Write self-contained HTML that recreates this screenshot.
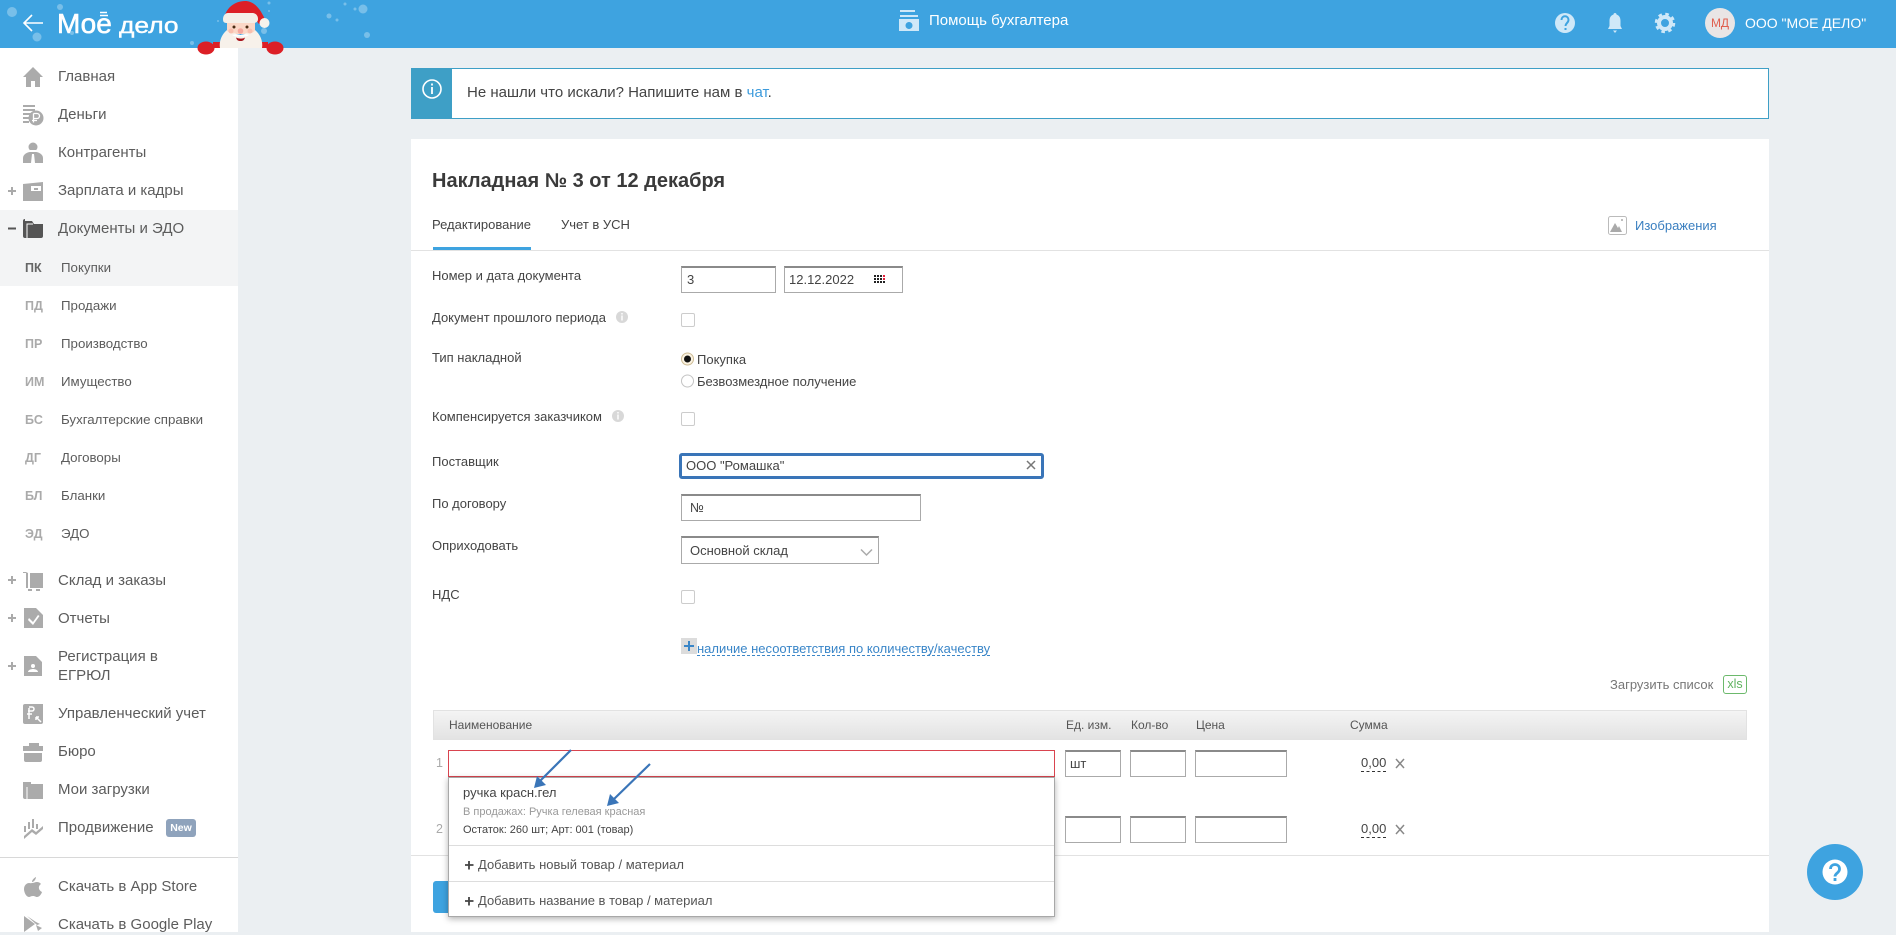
<!DOCTYPE html>
<html lang="ru"><head><meta charset="utf-8"><title>Накладная</title>
<style>
html,body{margin:0;padding:0;width:1896px;height:932px;overflow:hidden;background:#ebeff2;font-family:"Liberation Sans",Arial,sans-serif;color:#444}
.a{position:absolute}
.t{position:absolute;line-height:20px;white-space:nowrap}
.n{font-size:15px;color:#5c5c5c;left:58px;margin-top:1px}
.s{font-size:13.3px;color:#5c5c5c;left:61px}
.b{font-size:12.5px;font-weight:bold;color:#aaa;left:25px}
.l{font-size:13px;color:#444;left:432px}
.i{position:absolute;box-sizing:border-box;background:#fff;border:1px solid #aaa;border-top:2px solid #8a8a8a;font-size:13px;line-height:24px;color:#444;padding-left:5px}
.c{position:absolute;box-sizing:border-box;width:14px;height:14px;left:681px;border:1px solid #ccc;border-radius:2px;background:#fff}
.h{font-size:12px;color:#555;top:715px}
.hr{position:absolute;height:1px;background:#e2e2e2}
</style></head><body>

<div class="a" style="left:0;top:0;width:1896px;height:48px;background:#3ea3e0"></div>
<div class="a" style="left:0;top:48px;width:238px;height:884px;background:#fff"></div>
<div class="a" style="left:0;top:210px;width:238px;height:76px;background:#f3f4f5"></div>
<div class="hr" style="left:0;top:857px;width:238px;height:1px;background:#d8d8d8"></div>

<!-- logo text -->
<div class="t" style="left:57px;top:9px;font-size:28px;line-height:30px;color:#fff;-webkit-text-stroke:.6px #fff">Мое</div>
<div class="t" style="left:119px;top:11px;font-size:22px;line-height:30px;color:#fff;-webkit-text-stroke:.4px #fff;transform:scaleX(1.2);transform-origin:0 0">дело</div>

<div class="t" style="left:929px;top:11px;font-size:15px;color:#fff">Помощь бухгалтера</div>
<div class="t" style="left:1745px;top:13px;font-size:14px;color:#fff">ООО "МОЕ ДЕЛО"</div>
<div class="a" style="left:1705px;top:8px;width:30px;height:30px;border-radius:50%;background:#e9e5e5;color:#e0604f;font-size:12px;line-height:30px;text-align:center">МД</div>

<!-- sidebar -->
<div class="t n" style="top:66px">Главная</div>
<div class="t n" style="top:104px">Деньги</div>
<div class="t n" style="top:142px">Контрагенты</div>
<div class="t n" style="top:180px">Зарплата и кадры</div>
<div class="t n" style="top:218px">Документы и ЭДО</div>
<div class="t b" style="top:258px;color:#666">ПК</div><div class="t s" style="top:258px">Покупки</div>
<div class="t b" style="top:296px">ПД</div><div class="t s" style="top:296px">Продажи</div>
<div class="t b" style="top:334px">ПР</div><div class="t s" style="top:334px">Производство</div>
<div class="t b" style="top:372px">ИМ</div><div class="t s" style="top:372px">Имущество</div>
<div class="t b" style="top:410px">БС</div><div class="t s" style="top:410px">Бухгалтерские справки</div>
<div class="t b" style="top:448px">ДГ</div><div class="t s" style="top:448px">Договоры</div>
<div class="t b" style="top:486px">БЛ</div><div class="t s" style="top:486px">Бланки</div>
<div class="t b" style="top:524px">ЭД</div><div class="t s" style="top:524px">ЭДО</div>
<div class="t n" style="top:570px">Склад и заказы</div>
<div class="t n" style="top:608px">Отчеты</div>
<div class="t n" style="top:646px">Регистрация в</div>
<div class="t n" style="top:665px">ЕГРЮЛ</div>
<div class="t n" style="top:703px">Управленческий учет</div>
<div class="t n" style="top:741px">Бюро</div>
<div class="t n" style="top:779px">Мои загрузки</div>
<div class="t n" style="top:817px">Продвижение</div>
<div class="a" style="left:166px;top:819px;width:30px;height:18px;background:#8fa3bc;border-radius:3px;color:#fff;font-size:10.5px;font-weight:bold;line-height:18px;text-align:center">New</div>
<div class="t n" style="top:876px">Скачать в App Store</div>
<div class="t n" style="top:914px">Скачать в Google Play</div>

<!-- notice -->
<div class="a" style="left:411px;top:68px;width:1358px;height:51px;box-sizing:border-box;background:#fff;border:1px solid #3e9fc6"></div>
<div class="a" style="left:411px;top:68px;width:41px;height:51px;background:#3e9fc6"></div>
<div class="t" style="left:467px;top:83px;font-size:15px;color:#444">Не нашли что искали? Напишите нам в <span style="color:#3d9bdc">чат</span>.</div>

<!-- card -->
<div class="a" style="left:411px;top:139px;width:1358px;height:793px;background:#fff"></div>
<div class="t" style="left:432px;top:171px;font-size:20px;font-weight:bold;color:#3a3a3a">Накладная № 3 от 12 декабря</div>
<div class="t" style="left:432px;top:215px;font-size:13px;color:#444">Редактирование</div>
<div class="t" style="left:561px;top:215px;font-size:13px;color:#444">Учет в УСН</div>
<div class="hr" style="left:411px;top:250px;width:1358px"></div>
<div class="a" style="left:433px;top:247px;width:98px;height:3px;background:#3ea3e0"></div>
<div class="t" style="left:1635px;top:216px;font-size:13px;color:#3a7fc0">Изображения</div>

<div class="t l" style="top:266px">Номер и дата документа</div>
<div class="i" style="left:681px;top:266px;width:95px;height:27px">3</div>
<div class="i" style="left:784px;top:266px;width:119px;height:27px;padding-left:4px">12.12.2022</div>
<div class="t l" style="top:308px">Документ прошлого периода</div>
<div class="c" style="top:313px"></div>
<div class="t l" style="top:348px">Тип накладной</div>
<div class="t" style="left:697px;top:350px;font-size:13px">Покупка</div>
<div class="t" style="left:697px;top:372px;font-size:13px">Безвозмездное получение</div>
<div class="t l" style="top:407px">Компенсируется заказчиком</div>
<div class="c" style="top:412px"></div>
<div class="t l" style="top:452px">Поставщик</div>
<div class="a" style="left:679px;top:453px;width:365px;height:26px;box-sizing:border-box;border:3px solid #3a75b8;border-radius:3px;background:#fff"></div>
<div class="t" style="left:686px;top:456px;font-size:13px">ООО "Ромашка"</div>
<div class="t l" style="top:494px">По договору</div>
<div class="i" style="left:681px;top:494px;width:240px;height:27px;padding-left:8px">№</div>
<div class="t l" style="top:536px">Оприходовать</div>
<div class="i" style="left:681px;top:536px;width:198px;height:28px;padding-left:8px;line-height:25px">Основной склад</div>
<div class="t l" style="top:585px">НДС</div>
<div class="c" style="top:590px"></div>
<div class="a" style="left:681px;top:638px;width:16px;height:16px;background:#dcdcdc"></div>
<div class="t" style="left:697px;top:639px;font-size:13px;color:#3a86c8;height:16px;border-bottom:1px dashed #3a86c8;line-height:20px">наличие несоответствия по количеству/качеству</div>

<div class="t" style="left:1610px;top:675px;font-size:13px;color:#777">Загрузить список</div>
<div class="a" style="left:1723px;top:675px;width:24px;height:19px;box-sizing:border-box;border:1px solid #6cb96c;border-radius:3px;color:#5fb35f;font-size:12.5px;line-height:17px;text-align:center">xls</div>

<div class="a" style="left:433px;top:710px;width:1314px;height:30px;box-sizing:border-box;border:1px solid #e2e2e2;background:linear-gradient(#f4f4f4,#e3e3e3)"></div>
<div class="t h" style="left:449px">Наименование</div>
<div class="t h" style="left:1066px">Ед. изм.</div>
<div class="t h" style="left:1131px">Кол-во</div>
<div class="t h" style="left:1196px">Цена</div>
<div class="t h" style="left:1350px">Сумма</div>

<div class="t" style="left:436px;top:753px;font-size:12.5px;color:#aaa">1</div>
<div class="t" style="left:436px;top:819px;font-size:12.5px;color:#aaa">2</div>
<div class="a" style="left:448px;top:750px;width:607px;height:27px;box-sizing:border-box;border:1px solid #d9444f;background:#fff"></div>
<div class="i" style="left:1065px;top:750px;width:56px;height:27px;padding-left:4px">шт</div>
<div class="i" style="left:1130px;top:750px;width:56px;height:27px"></div>
<div class="i" style="left:1195px;top:750px;width:92px;height:27px"></div>
<div class="i" style="left:1065px;top:816px;width:56px;height:27px"></div>
<div class="i" style="left:1130px;top:816px;width:56px;height:27px"></div>
<div class="i" style="left:1195px;top:816px;width:92px;height:27px"></div>
<div class="t" style="left:1361px;top:753px;font-size:13px;height:18px;border-bottom:1px dashed #333">0,00</div>
<div class="t" style="left:1361px;top:819px;font-size:13px;height:18px;border-bottom:1px dashed #333">0,00</div>
<div class="hr" style="left:411px;top:855px;width:1358px"></div>

<!-- button -->
<div class="a" style="left:433px;top:881px;width:80px;height:32px;background:#3ea3e0;border-radius:3px"></div>

<!-- dropdown -->
<div class="a" style="left:448px;top:777px;width:607px;height:140px;box-sizing:border-box;background:#fff;border:1px solid #a8a8a8;box-shadow:0 2px 6px rgba(0,0,0,.3)"></div>
<div class="t" style="left:463px;top:783px;font-size:13px;color:#444">ручка красн.гел</div>
<div class="t" style="left:463px;top:802px;font-size:11px;color:#999">В продажах: Ручка гелевая красная</div>
<div class="t" style="left:463px;top:820px;font-size:11px;color:#444">Остаток: 260 шт; Арт: 001 (товар)</div>
<div class="hr" style="left:449px;top:845px;width:605px;background:#ddd"></div>
<div class="t" style="left:478px;top:855px;font-size:13px;color:#555">Добавить новый товар / материал</div>
<div class="hr" style="left:449px;top:881px;width:605px;background:#ddd"></div>
<div class="t" style="left:478px;top:891px;font-size:13px;color:#555">Добавить название в товар / материал</div>

<!-- icons overlay -->
<svg class="a" style="left:0;top:0;pointer-events:none" width="1896" height="932" viewBox="0 0 1896 932">
<!-- snow -->
<g fill="#fff" opacity=".3">
<circle cx="12" cy="12" r="5"/><circle cx="60" cy="7" r="3"/><circle cx="37" cy="37" r="4.5"/><circle cx="72" cy="33" r="2"/>
<circle cx="269" cy="3" r="1.5"/><circle cx="269" cy="11" r="1"/><circle cx="363" cy="9" r="4.5"/><circle cx="355" cy="9" r="1.5"/><circle cx="345" cy="4" r="1.5"/>
<circle cx="329" cy="16" r="2.5"/><circle cx="337" cy="20" r="1.5"/><circle cx="367" cy="35" r="3"/><circle cx="264" cy="31" r="3"/><circle cx="192" cy="43" r="2"/><circle cx="218" cy="21" r="1"/>
</g>
<!-- logo -->
<path d="M43 23H24M32 15l-8 8 8 8" fill="none" stroke="#fff" stroke-width="1.6"/>
<path d="M100 12.500h7M100 15.500h8" stroke="#fff" stroke-width="1.600" fill="none"/>
<!-- santa -->
<path d="M224 20C225 8 235 1 245 1c9 0 16 8 21 21l-7 2-5-6z" fill="#dc1f26"/>
<circle cx="264.500" cy="23" r="5" fill="#f5f2ec"/>
<path d="M213 42h9v6h-9zM260 42h8v6h-8z" fill="#dc1f26"/>
<path d="M227 22h28v12h-28z" fill="#fbd7c6"/>
<path d="M227 30C221 35 219 42 220 48H262C263 42 261 35 255 30 254 33 250 34 246 33 243 36 238 36 235 33 232 34 228 33 227 30z" fill="#f7f1ea"/>
<path d="M223 19c0-3 2-6 5-6h24c4 0 6 3 6 6s-2 4-5 4h-26c-3 0-4-1-4-4z" fill="#f4efe8"/>
<circle cx="234" cy="27" r="1.500" fill="#4a2a12"/><circle cx="247" cy="27" r="1.500" fill="#4a2a12"/>
<circle cx="231" cy="31" r="2.500" fill="#f8bfae"/><circle cx="250" cy="31" r="2.500" fill="#f8bfae"/>
<circle cx="240.500" cy="31" r="2.800" fill="#f6a79e"/>
<path d="M232 35c3-1 6-1 8.500 0 2.500-1 6-1 8.500 0-3 2-6 2-8.500 1-2.500 1-5.500 1-8.500-1z" fill="#fff"/>
<path d="M236 37.500c3 1.500 7 1.500 9 0-1 3-2 3.500-4.500 3.500s-3.500-.5-4.500-3.500z" fill="#a8141c"/>
<ellipse cx="206" cy="48" rx="8.500" ry="6.500" fill="#dc1f26"/><ellipse cx="275" cy="48" rx="8.500" ry="6.500" fill="#dc1f26"/>
<!-- header icons -->
<g fill="#cfe8f8">
<path d="M900 10h15v2h-15zM900 15h18v2h-18z"/>
<path fill-rule="evenodd" d="M899 19h20v12h-20zM909 22a3.500 3.500 0 1 0 .01 0z"/>
<circle cx="1565" cy="23" r="10"/>
<path d="M1615 13c1 0 1.500 .7 1.500 1.500 3 1 4 3.500 4 6.500v5l1.500 3h-14l1.500-3v-5c0-3 1-5.500 4-6.500 0-.8.500-1.500 1.500-1.500zM1613 30.500h4l-2 2.500z"/>
</g>
<circle cx="1665" cy="23" r="6" fill="none" stroke="#cfe8f8" stroke-width="4"/>
<circle cx="1665" cy="23" r="9" fill="none" stroke="#cfe8f8" stroke-width="2.500" stroke-dasharray="3.600 3.470"/>
<path d="M1561.500 20c0-5 7-5 7 0 0 3-3 3-3 6M1565.500 28v2" fill="none" stroke="#3ea3e0" stroke-width="2"/>
<!-- sidebar icons -->
<g fill="#ababab">
<path d="M33 67L23 77h3v10h5v-6h4v6h5V77h3z"/>
<path d="M23 105h12v2H23zM23 109h12v2H23zM23 113h8v2h-8zM23 117h6v2h-6zM23 121h6v2h-6z"/>
<circle cx="36" cy="118" r="7.500"/>
<circle cx="33" cy="147" r="4.500"/>
<path d="M23 163v-5c0-4 5-6 7-6h6c2 0 7 2 7 6v5z"/>
<path fill-rule="evenodd" d="M23 184l20-2v18H23zM31 186v5h10v-5z"/>
<path d="M23 199h20v2H23z"/>
<path d="M30 573h13v15H30zM23 572h3l2 1v15h-2v-15h-3zM28 589h4v2h-4zM36 589h4v2h-4z"/>
<path d="M24 608h12l7 7v13H24z"/>
<path d="M24 656h12l6 6v14H24z"/>
<path d="M25 704h18v18a2 2 0 0 1-2 2H25a2 2 0 0 1-2-2v-16a2 2 0 0 1 2-2z"/>
<path d="M29 743h10v3h4v5H23v-5h6zM24 753h18v7a2 2 0 0 1-2 2H26a2 2 0 0 1-2-2z"/>
<path fill-rule="evenodd" d="M23 782h8v2h12v15H25a2 2 0 0 1-2-2zM27 786v11h14v-11z"/>
<rect x="27" y="786" width="16" height="13"/>
<path d="M24 836l8-7 4 3 7-6v3l-7 6-4-3-8 7z"/>
<path d="M24 826h2v6h-2zM28 822h2v7h-2zM32 819h2v9h-2zM36 824h2v5h-2z"/>
<path d="M32 883c2 0 3-1 5-1 1.500 0 3 .7 4 2-3 2-3 6 1 8-1 3-3 5-5 5-1.500 0-2-1-4-1s-3 1-4 1c-3 0-5-5-5-8 0-4 3-6 5-6 1 0 2 .5 3 0zM32 882c0-2 2-4 4-5 0 2-2 5-4 5z"/>
<path d="M24 916l11 8-11 8zM36 925l6 3-4 3zM27 916l9 6 4 2-3 1z"/>
</g>
<path d="M25 221h7l2 3h9v12a2 2 0 0 1-2 2H25a2 2 0 0 1-2-2v-15a2 2 0 0 1 2-2z" fill="#555"/>
<path d="M27 238v-14h6" fill="none" stroke="#fff" stroke-width="1"/>
<g fill="#fff">
<rect x="31" y="186" width="10" height="5" fill="#fff"/><rect x="34" y="188" width="4" height="2" fill="#ababab"/>
<path d="M29 618l4 4 5-7 1.500 1-6.500 9-5-5z"/>
<circle cx="33" cy="666" r="2"/><path d="M28 672c0-2 3-3 5-3s5 1 5 3z"/>
<path d="M29 708v11M28 711h4a2 2 0 0 0 0-4h-3M27 714h5" fill="none" stroke="#fff" stroke-width="1.500"/>
<path d="M41 722l-5-5M36 717v3M36 717h3" fill="none" stroke="#fff" stroke-width="1.500"/>
<rect x="31" y="746" width="6" height="1.500" fill="#ababab"/>
<path d="M33.500 113.500h3.500a2.200 2.200 0 0 1 0 5h-3.500M33.500 113.500v9M32 120.500h5" fill="none" stroke="#fff" stroke-width="1.300"/>
<path d="M30 150h6l1 1-3 1h-2l-3-1zM32 154h2l1 9h-4z"/>
</g>
<path d="M27 787v12" stroke="#fff" stroke-width="1"/>
<!-- plus / minus -->
<g stroke="#aaa" stroke-width="2" fill="none">
<path d="M8 191h8M12 187v8"/><path d="M8 580h8M12 576v8"/><path d="M8 618h8M12 614v8"/><path d="M8 666h8M12 662v8"/>
</g>
<path d="M8 228.500h8" stroke="#555" stroke-width="2"/>
<!-- notice info -->
<circle cx="432" cy="89" r="9" fill="none" stroke="#fff" stroke-width="1.600"/>
<path d="M432 87v7M432 83.500v2" stroke="#fff" stroke-width="1.800"/>
<!-- images icon -->
<rect x="1608.500" y="216.500" width="18" height="18" rx="2" fill="#fff" stroke="#bbb"/>
<path d="M1610 232l5-9 3 5 1-2 3 6z" fill="#aaa"/><circle cx="1622" cy="220" r="1" fill="#aaa"/>
<!-- calendar -->
<g fill="#222"><rect x="874" y="275" width="2" height="2"/><rect x="877" y="275" width="2" height="2"/><rect x="880" y="275" width="2" height="2"/><rect x="874" y="278" width="2" height="2"/><rect x="877" y="278" width="2" height="2"/><rect x="880" y="278" width="2" height="2"/><rect x="874" y="281" width="2" height="2"/><rect x="877" y="281" width="2" height="2"/><rect x="880" y="281" width="2" height="2"/></g>
<rect x="883" y="275" width="2" height="2" fill="#e2203a"/><rect x="883" y="278" width="2" height="2" fill="#e2203a"/><rect x="883" y="281" width="2" height="2" fill="#222"/>
<!-- info dots -->
<circle cx="622" cy="317" r="6" fill="#d8d8d8"/><path d="M622 315.500v5M622 313v1.500" stroke="#fff" stroke-width="1.400"/>
<circle cx="618" cy="416" r="6" fill="#d8d8d8"/><path d="M618 414.500v5M618 412v1.500" stroke="#fff" stroke-width="1.400"/>
<!-- radios -->
<circle cx="687.500" cy="359" r="6" fill="#fbf3e2" stroke="#cdbb94"/><circle cx="687.500" cy="359" r="3.500" fill="#111"/>
<circle cx="687.500" cy="381" r="6" fill="#fff" stroke="#c4c4c4"/>
<!-- clear -->
<path d="M1027 461l8 8M1035 461l-8 8" stroke="#777" stroke-width="1.500"/>
<path d="M861 549.500l5.500 5.500 5.500-5.500" fill="none" stroke="#aaa" stroke-width="1.500"/>
<path d="M684 646h10M689 641v10" stroke="#3a86c8" stroke-width="2"/>
<!-- row x -->
<path d="M1396 759l8 9M1404 759l-8 9M1396 825l8 9M1404 825l-8 9" stroke="#888" stroke-width="1.500"/>
<!-- dropdown plus -->
<path d="M465 865h8.500M469 861v8.500M465 901h8.500M469 897v8.500" stroke="#444" stroke-width="1.800"/>
<!-- arrows -->
<path d="M571 750l-31 31M650 764l-37 36" stroke="#3a75b8" stroke-width="2.200"/>
<path d="M534 788l3-12 9 9zM607 806l3-12 9 9z" fill="#3a75b8"/>
<!-- help -->
<circle cx="1835" cy="872" r="28" fill="#3ea3e0"/>
<circle cx="1835" cy="872" r="12.500" fill="#fff"/>
<path d="M1830.500 869c0-6 9-6 9 0 0 4-4.500 4-4.500 7.500M1835 878v3" fill="none" stroke="#3ea3e0" stroke-width="2.800"/>
</svg>
</body></html>
